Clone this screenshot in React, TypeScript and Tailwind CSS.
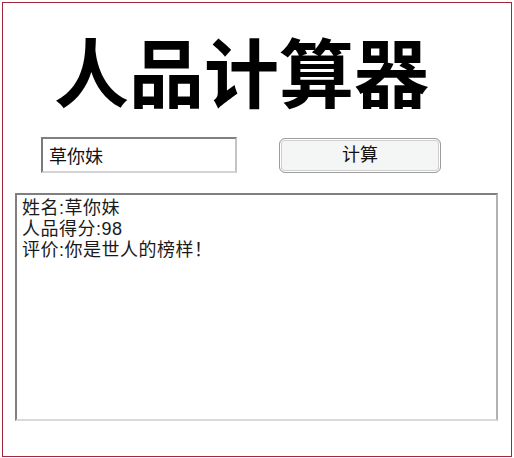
import React from 'react'

const cjk = "font-['Liberation_Sans','Noto_Sans_CJK_SC',sans-serif]"

export default function App() {
  const result = '姓名:草你妹\n人品得分:98\n评价:你是世人的榜样！'
  return (
    <div className={`w-[514px] h-[458px] bg-white p-[2px] ${cjk}`}>
      <div className="h-[455px] border border-[#a3283a] flex flex-col">
        <h1 className="pt-[36px] pl-[51px] text-[75px] leading-[75px] font-bold text-black">人品计算器</h1>

        <div className="mt-[23px] flex items-start">
          <input
            className="ml-[38px] w-[196px] h-[36px] border-2 border-t-[#808080] border-l-[#7a7a7a] border-b-[#d4d4d4] border-r-[#c4c4c4] px-[6px] text-[18px] text-[#111] outline-none"
            defaultValue="草你妹"
          />
          <button className="ml-[42px] mt-[1px] w-[162px] h-[35px] rounded-[6px] border border-[#9c9c9c] bg-[#f4f5f5] shadow-[inset_0_0_0_1px_#ffffff,inset_0_0_0_2px_#cfcfcf] text-[18px] text-[#111]">
            计算
          </button>
        </div>

        <textarea
          readOnly
          value={result}
          className="mt-[20px] ml-[12px] w-[483px] h-[228px] resize-none border-2 border-t-[#7f7f7f] border-l-[#808080] border-r-[#b0b2b5] border-b-[#d8dadc] pl-[5px] pr-[5px] pt-[3px] text-[18px] leading-[21px] tracking-[0.5px] text-[#1a1a1a] outline-none"
        />
      </div>
    </div>
  )
}
